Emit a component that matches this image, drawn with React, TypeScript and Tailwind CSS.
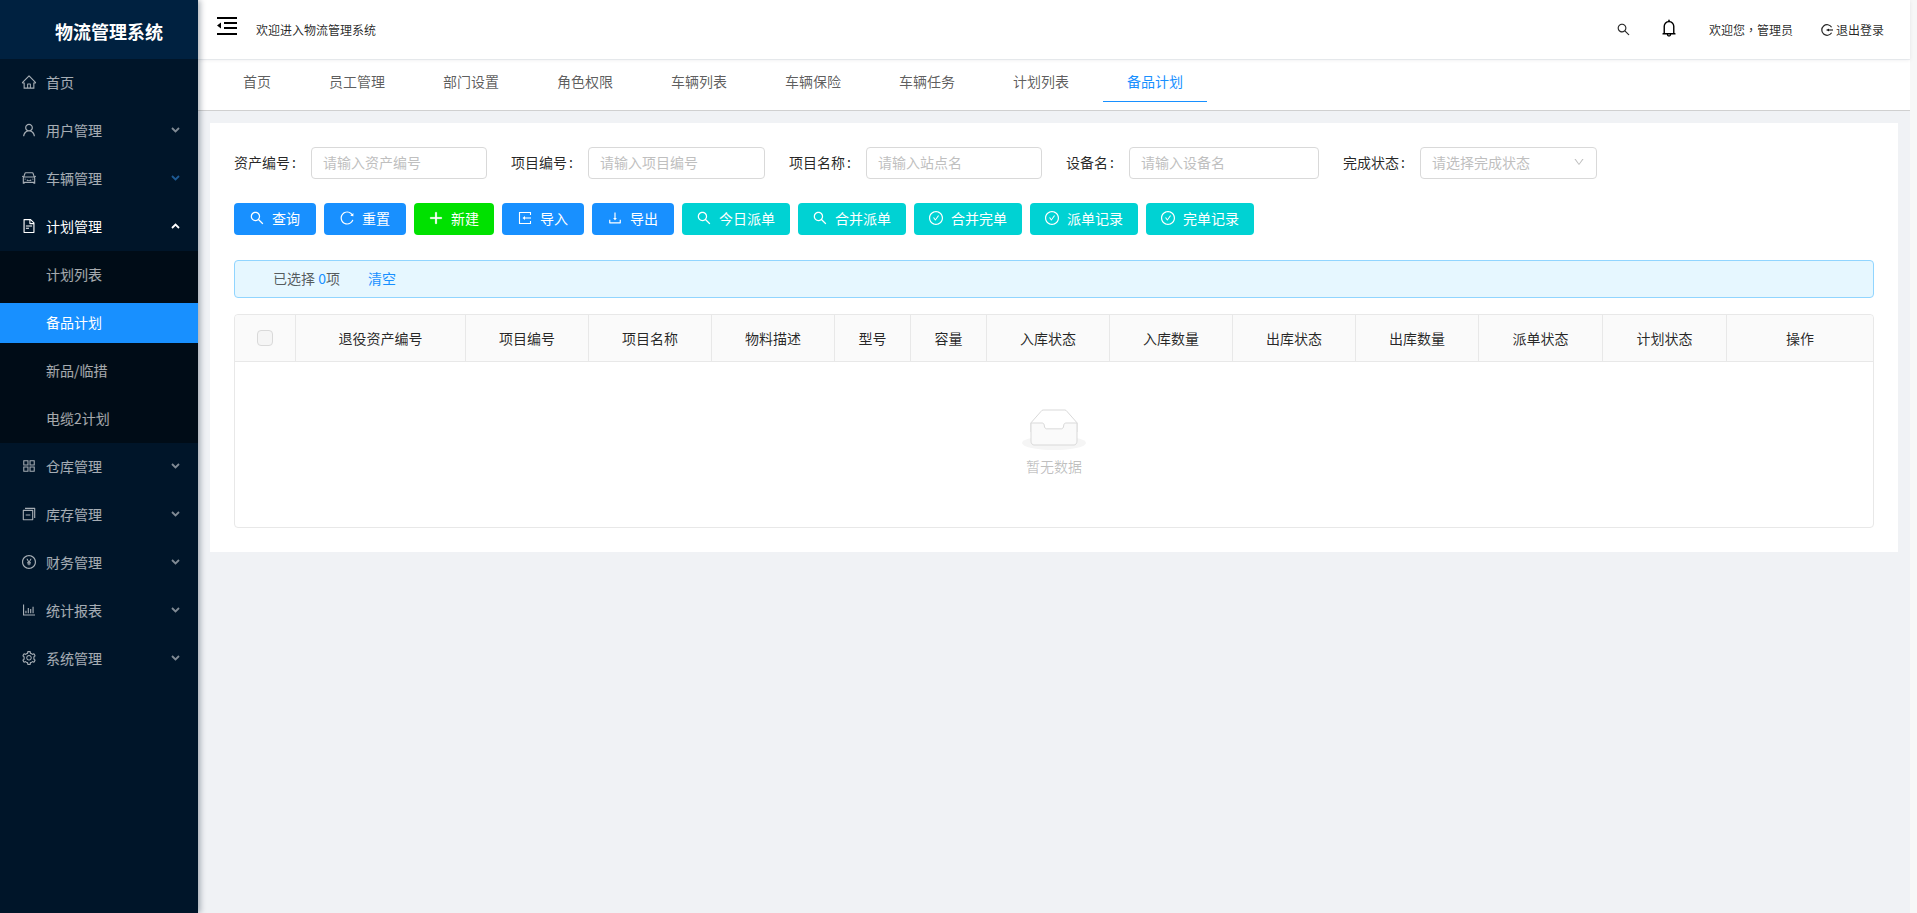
import {
  AiOutlineHome,
  AiOutlineUser,
  AiOutlineCar,
  AiOutlineFileText,
  AiOutlineAppstore,
  AiOutlineSwitcher,
  AiOutlinePayCircle,
  AiOutlineBarChart,
  AiOutlineSetting,
  AiOutlineDown,
  AiOutlineSearch,
  AiOutlineReload,
  AiOutlinePlus,
  AiOutlineDownload,
  AiOutlineCheckCircle,
  AiOutlineBell,
} from "react-icons/ai";
import type { ComponentType } from "react";
import type { IconType } from "react-icons";

const font = { fontFamily: '"Noto Sans CJK SC", "Liberation Sans", sans-serif' };

type MenuItem = { label: string; icon: IconType; arrow?: "down" | "up"; open?: boolean; dim?: boolean };

const topMenu: MenuItem[] = [
  { label: "首页", icon: AiOutlineHome },
  { label: "用户管理", icon: AiOutlineUser, arrow: "down" },
  { label: "车辆管理", icon: AiOutlineCar, arrow: "down", dim: true },
  { label: "计划管理", icon: AiOutlineFileText, arrow: "up", open: true },
];

const subMenu = [
  { label: "计划列表" },
  { label: "备品计划", active: true },
  { label: "新品/临措" },
  { label: "电缆2计划" },
];

const bottomMenu: MenuItem[] = [
  { label: "仓库管理", icon: AiOutlineAppstore, arrow: "down" },
  { label: "库存管理", icon: AiOutlineSwitcher, arrow: "down" },
  { label: "财务管理", icon: AiOutlinePayCircle, arrow: "down" },
  { label: "统计报表", icon: AiOutlineBarChart, arrow: "down" },
  { label: "系统管理", icon: AiOutlineSetting, arrow: "down" },
];

const tabs = ["首页", "员工管理", "部门设置", "角色权限", "车辆列表", "车辆保险", "车辆任务", "计划列表", "备品计划"];

const filters = [
  { label: "资产编号", placeholder: "请输入资产编号", labelW: "w-[77px]", inputW: "w-[176px]" },
  { label: "项目编号", placeholder: "请输入项目编号", labelW: "w-[77px]", inputW: "w-[177px]" },
  { label: "项目名称", placeholder: "请输入站点名", labelW: "w-[77px]", inputW: "w-[176px]" },
  { label: "设备名", placeholder: "请输入设备名", labelW: "w-[63px]", inputW: "w-[190px]" },
];

const ImportIcon = ({ className }: { className?: string }) => (
  <svg viewBox="0 0 16 16" className={className} fill="none" stroke="currentColor" strokeWidth="1.1">
    <path d="M13.5 5V2.5h-11v11h11V11" />
    <path d="M14 8H7.5" />
    <path d="M8 6L5.5 8L8 10Z" fill="currentColor" stroke="none" />
  </svg>
);

const PlusIcon = ({ className }: { className?: string }) => <AiOutlinePlus className={`${className} stroke-[50]`} />;

type ButtonDef = { label: string; icon: ComponentType<{ className?: string }>; color: string; width: string };

const buttons: ButtonDef[] = [
  { label: "查询", icon: AiOutlineSearch, color: "bg-[#1890ff]", width: "w-[82px]" },
  { label: "重置", icon: AiOutlineReload, color: "bg-[#1890ff]", width: "w-[82px]" },
  { label: "新建", icon: PlusIcon, color: "bg-[#00e100]", width: "w-[80px]" },
  { label: "导入", icon: ImportIcon, color: "bg-[#1890ff]", width: "w-[82px]" },
  { label: "导出", icon: AiOutlineDownload, color: "bg-[#1890ff]", width: "w-[82px]" },
  { label: "今日派单", icon: AiOutlineSearch, color: "bg-[#00d2d3]", width: "w-[108px]" },
  { label: "合并派单", icon: AiOutlineSearch, color: "bg-[#00d2d3]", width: "w-[108px]" },
  { label: "合并完单", icon: AiOutlineCheckCircle, color: "bg-[#00d2d3]", width: "w-[108px]" },
  { label: "派单记录", icon: AiOutlineCheckCircle, color: "bg-[#00d2d3]", width: "w-[108px]" },
  { label: "完单记录", icon: AiOutlineCheckCircle, color: "bg-[#00d2d3]", width: "w-[108px]" },
];

const columns = ["退役资产编号", "项目编号", "项目名称", "物料描述", "型号", "容量", "入库状态", "入库数量", "出库状态", "出库数量", "派单状态", "计划状态", "操作"];

const Chevron = ({ up, className }: { up?: boolean; className?: string }) => (
  <svg width="9" height="6" viewBox="0 0 9 6" className={className} fill="none" stroke="currentColor" strokeWidth="1.8">
    <path d={up ? "M1 5L4.5 1.5L8 5" : "M1 1L4.5 4.5L8 1"} />
  </svg>
);

const SideItem = ({ item }: { item: MenuItem }) => {
  const Icon = item.icon;
  return (
    <div className={`h-10 mb-2 flex items-center pl-[21px] pr-[18px] text-sm ${item.open ? "text-white" : "text-white/65"}`}>
      <Icon className="w-4 h-4 mr-[9px]" />
      <span className="flex-1">{item.label}</span>
      {item.arrow && (
        <Chevron up={item.arrow === "up"} className={item.dim ? "text-[#1d5a94]" : item.open ? "text-white" : "text-white/50"} />
      )}
    </div>
  );
};

const Sidebar = () => (
  <aside className="w-[198px] shrink-0 bg-[#001529] shadow-[2px_0_6px_rgba(0,21,41,0.35)] z-20">
    <div className="h-[59px] bg-[#002140] flex items-center pl-[55px] pt-[3px] text-lg font-bold text-white">物流管理系统</div>
    <nav className="pt-[3px]">
      {topMenu.map((item) => (
        <SideItem key={item.label} item={item} />
      ))}
      <div className="-mt-[3px] mb-[3px] py-1 bg-[#000c17]">
        {subMenu.map((s) => (
          <div
            key={s.label}
            className={`h-10 mb-2 last:mb-0 pb-0.5 flex items-center pl-[46px] text-sm ${
              s.active ? "bg-[#1890ff] text-white" : "text-white/65"
            }`}
          >
            {s.label}
          </div>
        ))}
      </div>
      {bottomMenu.map((item) => (
        <SideItem key={item.label} item={item} />
      ))}
    </nav>
  </aside>
);

const FoldIcon = () => (
  <svg width="20" height="18" viewBox="0 0 20 18" fill="currentColor" className="text-black">
    <rect x="0" y="0" width="20" height="2" />
    <rect x="7" y="5" width="13" height="2" />
    <rect x="7" y="10" width="13" height="2" />
    <rect x="0" y="16" width="20" height="2" />
    <path d="M0 8.5L4 5.5V11.5Z" />
  </svg>
);

const LogoutIcon = () => (
  <svg width="12" height="12" viewBox="0 0 12 12" fill="none" stroke="currentColor" strokeWidth="1.2" className="ml-[28px] mr-[3px]">
    <path d="M10.6 3.2A5.3 5.3 0 1 0 10.6 8.8" />
    <path d="M5.5 6H12" />
    <path d="M8 4.5L6 6L8 7.5Z" fill="currentColor" stroke="none" />
  </svg>
);

const TopBar = () => (
  <header className="h-[59px] bg-white shadow-[0_1px_4px_rgba(0,21,41,0.08)] flex items-center pl-[19px] pr-[26px] text-xs text-black/85 relative z-10">
    <div className="mb-[7px]">
      <FoldIcon />
    </div>
    <span className="ml-[19px]">欢迎进入物流管理系统</span>
    <div className="ml-auto flex items-center">
      <AiOutlineSearch className="w-[15px] h-[15px] text-black/85" />
      <AiOutlineBell className="w-5 h-5 ml-[28px] mb-[3px] text-black" />
      <span className="ml-[30px]">
        欢迎您<span className="[font-family:'Noto_Sans_CJK_TC']">，</span>管理员
      </span>
      <LogoutIcon />
      <span>退出登录</span>
    </div>
  </header>
);

const TabBar = () => (
  <div className="h-[51px] bg-white border-b border-[#d0d0d0] flex pl-[21px] gap-[10px] text-sm text-black/65">
    {tabs.map((t) => {
      const active = t === "备品计划";
      return (
        <div key={t} className={`px-6 pt-px h-[42px] flex items-center border-b ${active ? "text-[#1890ff] border-[#1890ff]" : "border-transparent"}`}>
          {t}
        </div>
      );
    })}
  </div>
);

const FilterRow = () => (
  <div className="flex items-center h-8 text-sm text-black/85">
    {filters.map((f) => (
      <div key={f.label} className="flex items-center mr-[24px]">
        <span className={`${f.labelW} pb-0.5`}>
          {f.label}
          <span className="ml-0.5">:</span>
        </span>
        <div className={`${f.inputW} h-8 px-[11px] pb-0.5 border border-[#d9d9d9] rounded flex items-center text-[#bfbfbf]`}>{f.placeholder}</div>
      </div>
    ))}
    <div className="flex items-center">
      <span className="w-[77px] pb-0.5">
        完成状态<span className="ml-0.5">:</span>
      </span>
      <div className="w-[177px] h-8 px-[11px] pb-0.5 border border-[#d9d9d9] rounded flex items-center justify-between text-[#bfbfbf]">
        请选择完成状态
        <AiOutlineDown className="w-3 h-3" />
      </div>
    </div>
  </div>
);

const EmptyBox = () => (
  <svg width="64" height="41" viewBox="0 0 64 41">
    <g transform="translate(0 1)" fill="none" fillRule="evenodd">
      <ellipse fill="#f5f5f5" cx="32" cy="33" rx="32" ry="7" />
      <g fillRule="nonzero" stroke="#d9d9d9">
        <path d="M55 12.76L44.854 1.258C44.367.474 43.656 0 42.907 0H21.093c-.749 0-1.46.474-1.947 1.257L9 12.761V22h46v-9.24z" />
        <path
          d="M41.613 15.931c0-1.605.994-2.93 2.227-2.931H55v18.137C55 33.26 53.68 35 52.05 35h-40.1C10.32 35 9 33.259 9 31.137V13h11.16c1.233 0 2.227 1.323 2.227 2.928v.022c0 1.605 1.005 2.901 2.237 2.901h14.752c1.232 0 2.237-1.308 2.237-2.913v-.007z"
          fill="#fafafa"
        />
      </g>
    </g>
  </svg>
);

const DataTable = () => (
  <div className="mt-4 border border-[#e8e8e8] rounded h-[214px] text-sm">
    <div className="h-[47px] bg-[#fafafa] border-b border-[#e8e8e8] rounded-t grid grid-cols-[60px_170px_123px_123px_123px_76px_76px_123px_123px_123px_123px_124px_124px_1fr] text-black/85">
      <div className="flex items-center justify-center">
        <span className="w-4 h-4 bg-[#f5f5f5] border border-[#d9d9d9] rounded-sm" />
      </div>
      {columns.map((c) => (
        <div key={c} className="flex items-center justify-center border-l border-[#e8e8e8]">
          {c}
        </div>
      ))}
    </div>
    <div className="flex flex-col items-center pt-[47px]">
      <EmptyBox />
      <p className="mt-[6px] text-black/25">暂无数据</p>
    </div>
  </div>
);

const App = () => (
  <div className="flex w-full h-[913px] overflow-hidden bg-[#f0f2f5]" style={font}>
    <Sidebar />
    <main className="flex-1 min-w-0">
      <TopBar />
      <div className="pt-px">
        <TabBar />
      </div>
      <div className="mt-3 mx-3 bg-white px-6 pt-6 pb-6 h-[429px]">
        <FilterRow />
        <div className="mt-6 flex gap-2">
          {buttons.map((b) => {
            const Icon = b.icon;
            return (
              <button key={b.label} className={`${b.width} ${b.color} h-8 pb-0.5 rounded flex items-center justify-center gap-[7px] text-sm text-white`}>
                <Icon className="w-4 h-4 -ml-px" />
                {b.label}
              </button>
            );
          })}
        </div>
        <div className="mt-[25px] h-[38px] pb-0.5 bg-[#e6f7ff] border border-[#91d5ff] rounded flex items-center pl-[38px] text-sm text-black/65">
          已选择&nbsp;<span className="text-[#1890ff]">0</span>项
          <span className="ml-[28px] text-[#1890ff]">清空</span>
        </div>
        <DataTable />
      </div>
    </main>
    {/* scrollbar track */}
    <div className="w-[7px] shrink-0 bg-[#f7f7f7]" />
  </div>
);

export default App;
